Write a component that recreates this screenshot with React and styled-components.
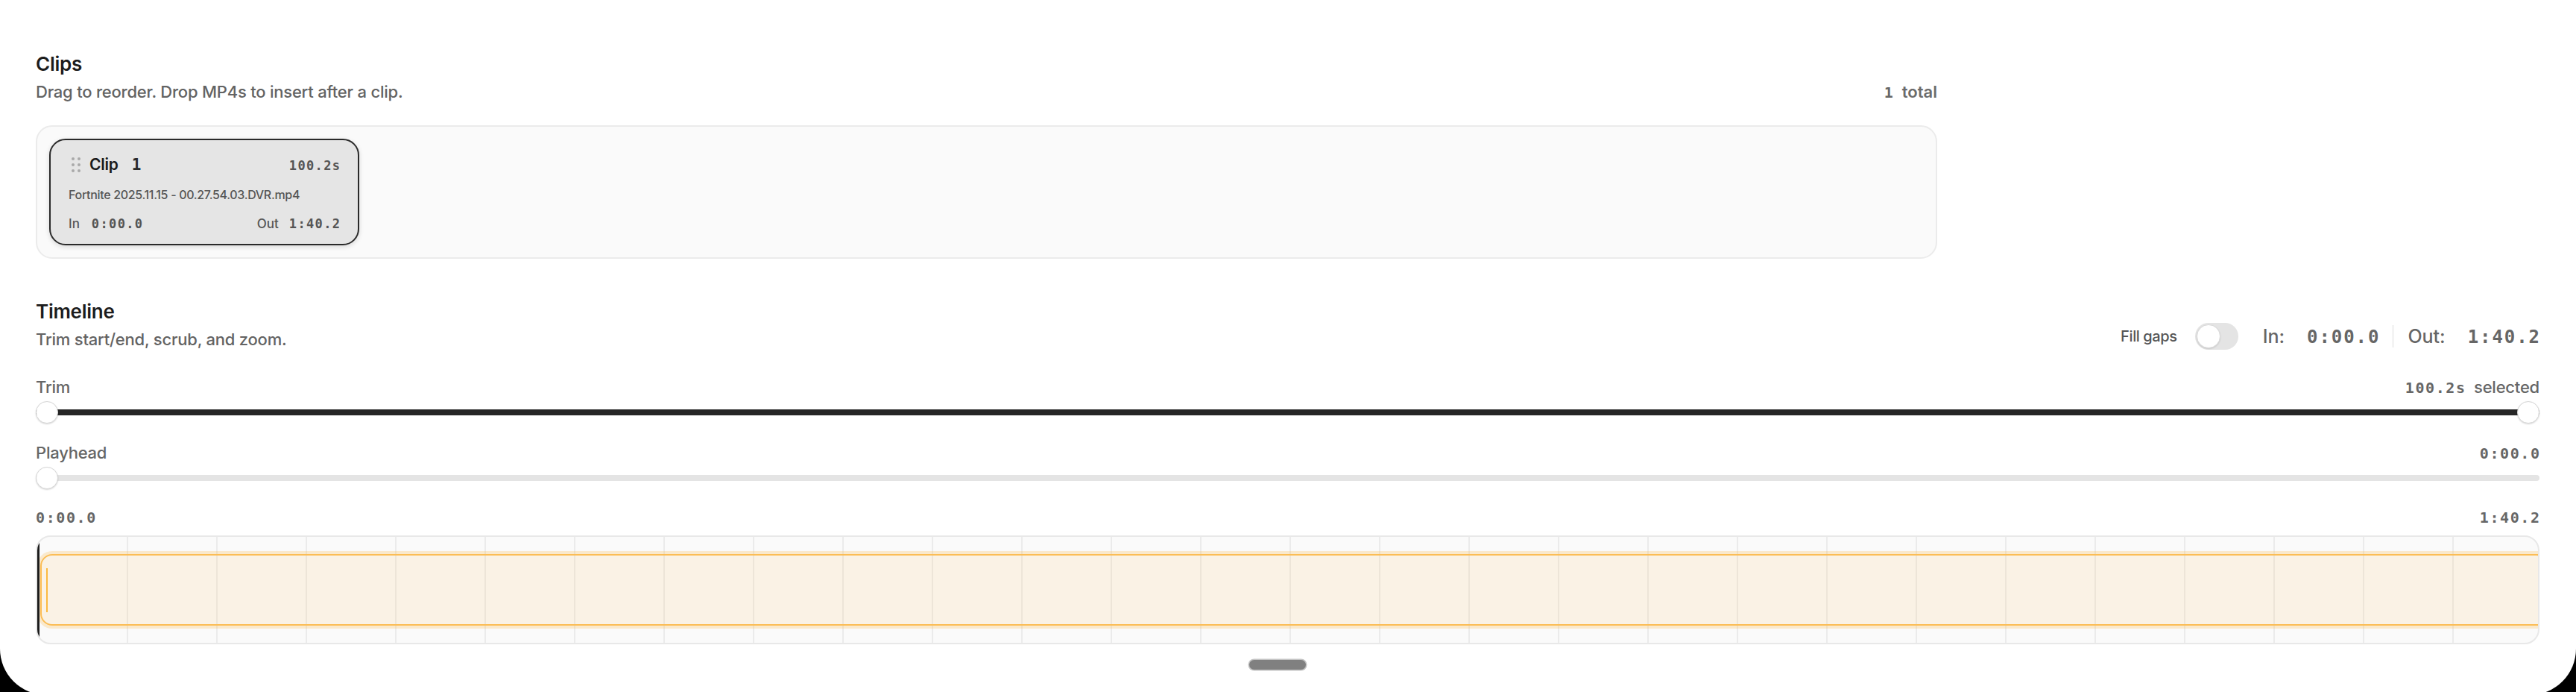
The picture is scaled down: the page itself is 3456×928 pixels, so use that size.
import styled, { createGlobalStyle } from 'styled-components';

const GlobalStyle = createGlobalStyle`
  html, body {
    margin: 0;
    padding: 0;
    height: 100%;
    overflow: hidden;
    background: #000;
  }
  body {
    font-family: Inter, "Noto Sans", sans-serif;
    -webkit-font-smoothing: antialiased;
  }
`;

const Sheet = styled.div`
  width: 3456px;
  height: 932px;
  box-sizing: border-box;
  padding: 71px 49px 0 48px;
  background: #fff;
  border-radius: 0 0 62px 62px;
  display: flex;
  flex-direction: column;
`;

const Section = styled.section`
  display: flex;
  flex-direction: column;
  max-width: ${(p) => p.$maxWidth || 'none'};
  margin-top: ${(p) => p.$top || 0}px;
`;

const SectionHead = styled.div`
  display: flex;
  justify-content: space-between;
  align-items: flex-end;
`;

const Title = styled.h2`
  margin: 0;
  font-size: 26px;
  line-height: 30px;
  font-weight: 600;
  letter-spacing: -0.01em;
  color: #1c1c1c;
`;

const Subtitle = styled.p`
  margin: 8px 0 0;
  font-size: 22px;
  line-height: 28px;
  font-weight: 500;
  letter-spacing: -0.01em;
  color: #636363;
`;

const Num = styled.span`
  font-family: "DejaVu Sans Mono", "Liberation Mono", monospace;
  font-size: ${(p) => p.$size || 17}px;
  line-height: 1;
  font-weight: 700;
  letter-spacing: 0.08em;
  margin-right: -0.08em;
  color: ${(p) => p.$color || '#666'};
`;

const Count = styled.div`
  display: flex;
  align-items: baseline;
  gap: 12px;
  font-size: 22px;
  line-height: 28px;
  font-weight: 600;
  color: #6b6b6b;
`;

const ClipsPanel = styled.div`
  margin-top: 31px;
  padding: 16px;
  border: 2px solid #ebebeb;
  border-radius: 22px;
  background: #fafafa;
  display: flex;
  gap: 16px;
`;

const ClipCard = styled.div`
  width: 416px;
  box-sizing: border-box;
  padding: 19px 24px 15px;
  border: 2px solid #2a2a2a;
  border-radius: 22px;
  background: #e5e5e5;
  box-shadow: 0 2px 6px rgba(0, 0, 0, 0.14);
  display: flex;
  flex-direction: column;
`;

const CardRow = styled.div`
  display: flex;
  align-items: baseline;
  margin-top: ${(p) => p.$top || 0}px;
  line-height: ${(p) => p.$lh || 24}px;
`;

const ClipName = styled.span`
  margin-left: 12px;
  font-size: 21px;
  font-weight: 600;
  letter-spacing: -0.01em;
  color: #1a1a1a;
`;

const Spacer = styled.span`
  flex: 1;
`;

const FileName = styled.div`
  margin-top: 15px;
  font-size: 16px;
  line-height: 22px;
  font-weight: 500;
  letter-spacing: -0.02em;
  color: #555;
  white-space: nowrap;
`;

const SmallLabel = styled.span`
  font-size: 17px;
  font-weight: 500;
  color: #555;
  margin-right: ${(p) => p.$gap || 14}px;
`;

const Controls = styled.div`
  display: flex;
  align-items: center;
  height: 36px;
`;

const ControlLabel = styled.span`
  font-size: 20px;
  font-weight: 500;
  letter-spacing: -0.02em;
  color: #555;
`;

const Toggle = styled.div`
  width: 58px;
  height: 36px;
  margin-left: 24px;
  box-sizing: border-box;
  padding: 2px;
  border-radius: 18px;
  background: #e4e4e4;
  display: flex;
  align-items: center;
`;

const ToggleKnob = styled.div`
  width: 32px;
  height: 32px;
  box-sizing: border-box;
  border-radius: 50%;
  background: #fff;
  border: 1px solid #dadada;
  box-shadow: 0 1px 2px rgba(0, 0, 0, 0.12);
`;

const Readout = styled.div`
  display: flex;
  align-items: baseline;
  gap: 30px;
  margin-left: ${(p) => p.$left || 0}px;
`;

const ReadoutLabel = styled.span`
  font-size: 25px;
  font-weight: 500;
  color: #666;
`;

const Divider = styled.div`
  width: 1px;
  height: 30px;
  margin: 0 19px;
  background: #dcdcdc;
`;

const FieldHead = styled.div`
  display: flex;
  justify-content: space-between;
  align-items: baseline;
  margin-top: ${(p) => p.$top || 0}px;
  line-height: 28px;
`;

const FieldLabel = styled.span`
  font-size: 22px;
  font-weight: 500;
  letter-spacing: -0.01em;
  color: #666;
`;

const Selected = styled.span`
  display: flex;
  align-items: baseline;
  gap: 12px;
`;

const SliderBox = styled.div`
  position: relative;
  height: 30px;
  margin-top: 5px;
  display: flex;
  align-items: center;
`;

const Rail = styled.div`
  flex: 1;
  height: 8px;
  border-radius: 4px;
  background: ${(p) => (p.$dark ? '#262626' : '#e4e4e4')};
`;

const Thumb = styled.div`
  position: absolute;
  top: 0;
  ${(p) => (p.$end ? 'right: 0;' : 'left: 0;')}
  width: 30px;
  height: 30px;
  box-sizing: border-box;
  border-radius: 50%;
  background: #fff;
  border: 1.5px solid #d6d6d6;
  box-shadow: 0 1px 2px rgba(0, 0, 0, 0.16);
`;

const TimeScale = styled.div`
  display: flex;
  justify-content: space-between;
  align-items: center;
  height: 24px;
  margin-top: 26px;
`;

const Track = styled.div`
  position: relative;
  margin-top: 12px;
  height: 146px;
  box-sizing: border-box;
  border: 2px solid #e8e8e8;
  border-radius: 20px;
  background-color: #fafafa;
  background-image: linear-gradient(90deg, #ebebeb 2px, transparent 2px);
  background-size: 120px 100%;
  background-position: 120px 0;
  overflow: hidden;
  display: flex;
  align-items: center;
`;

const Segment = styled.div`
  flex: 0 0 calc(100% + 10px);
  margin-left: 4px;
  height: 96px;
  box-sizing: border-box;
  padding-left: 6px;
  border: 2px solid #fbbd55;
  border-radius: 16px;
  background: rgba(251, 189, 85, 0.12);
  box-shadow: 0 0 0 4px rgba(251, 189, 85, 0.28);
  display: flex;
  align-items: center;
`;

const Grip = styled.div`
  width: 2px;
  height: 59px;
  background: #fbb940;
`;

const Playhead = styled.div`
  position: absolute;
  left: 0;
  top: 0;
  bottom: 0;
  width: 3px;
  background: #1c1c1c;
`;

const HandleRow = styled.div`
  display: flex;
  justify-content: center;
  padding-right: 27px;
  margin-top: 21px;
`;

const Handle = styled.div`
  width: 76px;
  height: 13px;
  border-radius: 7px;
  background: #808080;
  box-shadow: 0 0 0 1.5px #c2c2c2;
`;

function DragDots() {
  const dots = [];
  [6, 14].forEach((cx) =>
    [2, 10, 18].forEach((cy) => dots.push(<circle key={`${cx}-${cy}`} cx={cx} cy={cy} r="2" />))
  );
  return (
    <svg width="16" height="20" viewBox="0 0 16 20" fill="#a9a9a9" style={{ alignSelf: 'center' }}>
      {dots}
    </svg>
  );
}

function Slider({ dark, range }) {
  return (
    <SliderBox>
      <Rail $dark={dark} />
      <Thumb />
      {range && <Thumb $end />}
    </SliderBox>
  );
}

export default function App() {
  return (
    <>
      <GlobalStyle />
      <Sheet>
        <Section $maxWidth="2551px">
          <SectionHead>
            <div>
              <Title>Clips</Title>
              <Subtitle>Drag to reorder. Drop MP4s to insert after a clip.</Subtitle>
            </div>
            <Count>
              <Num $size={20} $color="#666">1</Num>
              <span>total</span>
            </Count>
          </SectionHead>
          <ClipsPanel>
            <ClipCard>
              <CardRow $lh={28}>
                <DragDots />
                <ClipName>Clip</ClipName>
                <Num $size={21} $color="#2a2a2a" style={{ marginLeft: 18 }}>1</Num>
                <Spacer />
                <Num $size={17} $color="#555">100.2s</Num>
              </CardRow>
              <FileName>Fortnite 2025.11.15 - 00.27.54.03.DVR.mp4</FileName>
              <CardRow $top={16}>
                <SmallLabel $gap={16}>In</SmallLabel>
                <Num $size={17} $color="#555">0:00.0</Num>
                <Spacer />
                <SmallLabel>Out</SmallLabel>
                <Num $size={17} $color="#555">1:40.2</Num>
              </CardRow>
            </ClipCard>
          </ClipsPanel>
        </Section>

        <Section $top={56}>
          <SectionHead>
            <div>
              <Title>Timeline</Title>
              <Subtitle>Trim start/end, scrub, and zoom.</Subtitle>
            </div>
            <Controls>
              <ControlLabel>Fill gaps</ControlLabel>
              <Toggle>
                <ToggleKnob />
              </Toggle>
              <Readout $left={33}>
                <ReadoutLabel>In:</ReadoutLabel>
                <Num $size={24}>0:00.0</Num>
              </Readout>
              <Divider />
              <Readout>
                <ReadoutLabel>Out:</ReadoutLabel>
                <Num $size={24}>1:40.2</Num>
              </Readout>
            </Controls>
          </SectionHead>

          <FieldHead $top={36}>
            <FieldLabel>Trim</FieldLabel>
            <Selected>
              <Num $size={20}>100.2s</Num>
              <FieldLabel>selected</FieldLabel>
            </Selected>
          </FieldHead>
          <Slider dark range />

          <FieldHead $top={25}>
            <FieldLabel>Playhead</FieldLabel>
            <Num $size={20}>0:00.0</Num>
          </FieldHead>
          <Slider />

          <TimeScale>
            <Num $size={20}>0:00.0</Num>
            <Num $size={20}>1:40.2</Num>
          </TimeScale>
          <Track>
            <Segment>
              <Grip />
            </Segment>
            <Playhead />
          </Track>
          <HandleRow>
            <Handle />
          </HandleRow>
        </Section>
      </Sheet>
    </>
  );
}
